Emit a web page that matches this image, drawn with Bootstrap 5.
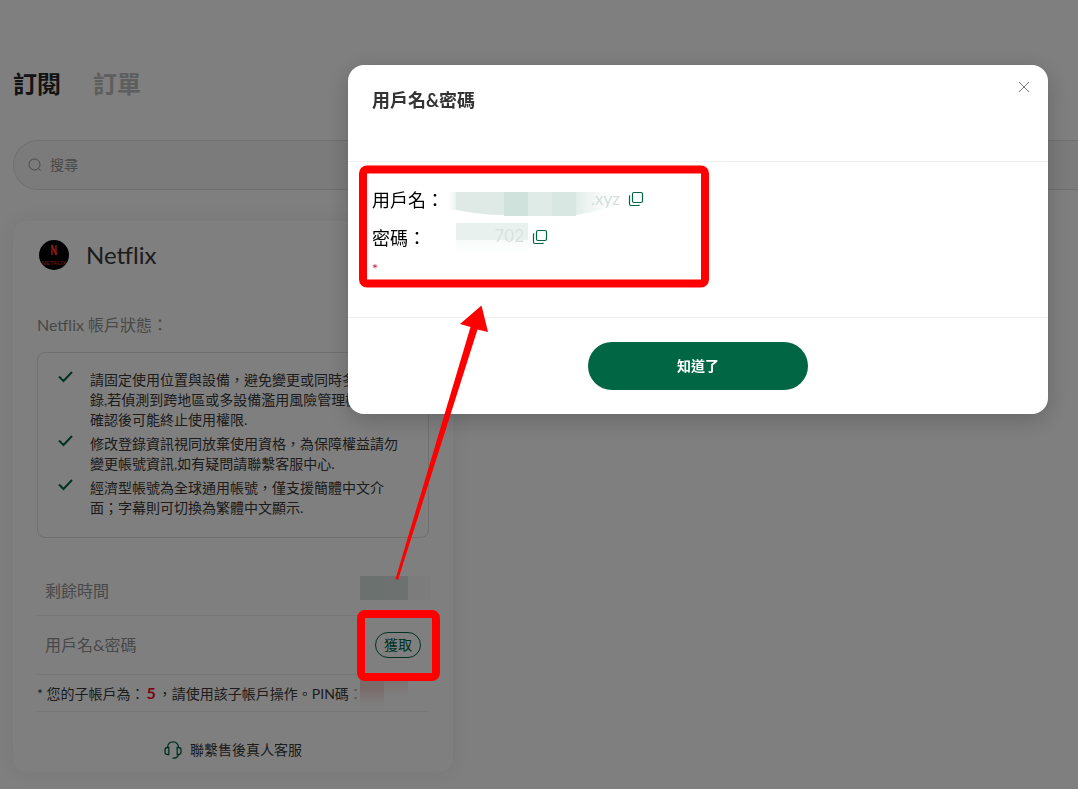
<!DOCTYPE html>
<html lang="zh-Hant">
<head>
<meta charset="utf-8">
<meta name="viewport" content="width=device-width, initial-scale=1">
<title>訂閱</title>
<link href="https://cdn.jsdelivr.net/npm/bootstrap@5.3.0/dist/css/bootstrap.min.css" rel="stylesheet">
<style>
  :root { --brand: #006644; --accent: #c8102e; --muted-ink: #929292; }
  body { font-family: Lato, "Noto Sans CJK TC", sans-serif; font-size: 14px; line-height: 20px; color: #383838; overflow: hidden; }
  .page { padding: 66px 0 16px 13px; }
  .page-tabs { gap: 32px; margin-bottom: 38px; }
  .page-tabs a { font-size: 24px; line-height: 36px; font-weight: 700; color: #bdbdbd; text-decoration: none; }
  .page-tabs a.active { color: #262626; }
  .search-bar { height: 50px; padding-left: 14px; gap: 8px; border: 1px solid #dedede; border-right: 0; border-radius: 25px 0 0 25px; background: #f7f7f7; margin-bottom: 31px; }
  .search-bar input { font-size: 14px; color: #333; }
  .search-bar input::placeholder { color: #949494; }
  .plan-card { width: 440px; max-width: 100%; border-radius: 14px; padding: 17px 24px 12px; background: #fff; box-shadow: 0 0 24px rgba(0, 0, 0, .08); }
  .plan-logo { width: 34px; height: 34px; }
  .plan-name { font-size: 24px; line-height: 34px; font-weight: 400; }
  .plan-head { gap: 15px; margin-bottom: 41px; }
  .status-label { font-size: 16px; line-height: 24px; color: var(--muted-ink); margin-bottom: 15px; }
  .notice-list { border: 1px solid #dedede; border-radius: 8px; padding: 17px 28px 19px 20px; gap: 4px; margin-bottom: 34px; }
  .notice-list li { gap: 17px; }
  .notice-list svg { margin-top: 1px; }
  .info-row { font-size: 16px; line-height: 24px; color: var(--muted-ink); border-bottom: 1px solid #efefef; padding: 7px 8px; min-height: 44px; }
  .info-row.tall { min-height: 59px; }
  .hidden-time { margin: -3px -10px 0 0; }
  .get-btn { width: 46px; height: 26px; font-size: 14px; line-height: 20px; border: 1px solid var(--brand); border-radius: 13px; color: var(--brand); background: #fff; }
  .pin-note { height: 37px; border-bottom: 1px solid #efefef; padding: 8px 0; white-space: nowrap; }
  .pin-note b { font-size: 16px; line-height: 20px; color: #f00a2c; margin: 0 2px; }
  .pin-note svg { margin: -4px 0 0 -8px; }
  .support-link { color: #383838; text-decoration: none; gap: 8px; padding-top: 28px; }
  .modal-backdrop.show { opacity: .5; }
  .cred-dialog { width: 700px; max-width: calc(100% - 348px); margin: 65px 0 0 348px; }
  .cred-dialog .modal-content { border: 0; border-radius: 16px; box-shadow: 0 6px 24px rgba(0, 0, 0, .2); }
  .cred-dialog .modal-header { height: 97px; padding: 23px 17px 0 24px; border-color: #f0f0f0; }
  .cred-dialog .modal-title { font-size: 18px; line-height: 24px; font-weight: 700; color: #333; }
  .close-x { width: 14px; height: 14px; margin-top: -8px; }
  .cred-dialog .modal-body { padding: 19px 24px 36px; color: #000; font-size: 18px; line-height: 38px; }
  .cred-dialog .modal-footer { padding: 24px; border-color: #f0f0f0; }
  .copy-btn { width: 16px; height: 16px; margin: 0 0 2px 4px; }
  .ok-btn, .ok-btn:hover { width: 220px; height: 48px; border-radius: 24px; background: var(--brand); font-size: 14px; line-height: 20px; padding: 0; font-weight: 700; color: #fff; }
  .star { font-size: 14px; line-height: 24px; color: var(--accent); }
  .markup { z-index: 1080; pointer-events: none; }
</style>
</head>
<body>
<main class="page">
  <nav class="page-tabs d-flex">
    <a class="active" href="#">訂閱</a>
    <a href="#">訂單</a>
  </nav>
  <label class="search-bar d-flex align-items-center">
    <svg width="14" height="14" viewBox="0 0 14 14" fill="none" stroke="#909090"><circle cx="6.5" cy="6.5" r="5.5"/><path d="M10.5 10.5 12.5 12.5"/></svg>
    <input class="border-0 bg-transparent p-0 flex-grow-1" type="search" placeholder="搜尋" aria-label="搜尋">
  </label>

  <section class="plan-card">
    <div class="plan-head d-flex align-items-center">
      <svg class="plan-logo" viewBox="0 0 34 34" aria-hidden="true">
        <circle cx="17" cy="17" r="16" fill="#000" stroke="#fff" stroke-width="2"/>
        <path d="M15 7v10M19 7v10" stroke="#c8201a" stroke-width="2"/><path d="M14.500 7 19.500 17" stroke="#ff3a2c" stroke-width="2"/>
        <text x="17" y="27" text-anchor="middle" font-family="Liberation Sans" font-size="6" fill="#e83a30">NETFLIX</text>
      </svg>
      <h2 class="plan-name mb-0">Netflix</h2>
    </div>
    <div class="status-label">Netflix 帳戶狀態：</div>
    <ul class="notice-list list-unstyled d-flex flex-column">
      <li class="d-flex"><svg class="flex-shrink-0" width="15" height="12" viewBox="0 0 15 12" fill="none" stroke="#006644" stroke-width="2"><path d="M1 5.5 5.5 10 14 1"/></svg><span>請固定使用位置與設備，避免變更或同時多設備登錄,若偵測到跨地區或多設備濫用風險管理機制，確認後可能終止使用權限.</span></li>
      <li class="d-flex"><svg class="flex-shrink-0" width="15" height="12" viewBox="0 0 15 12" fill="none" stroke="#006644" stroke-width="2"><path d="M1 5.5 5.5 10 14 1"/></svg><span>修改登錄資訊視同放棄使用資格，為保障權益請勿變更帳號資訊,如有疑問請聯繫客服中心.</span></li>
      <li class="d-flex"><svg class="flex-shrink-0" width="15" height="12" viewBox="0 0 15 12" fill="none" stroke="#006644" stroke-width="2"><path d="M1 5.5 5.5 10 14 1"/></svg><span>經濟型帳號為全球通用帳號，僅支援簡體中文介面；字幕則可切換為繁體中文顯示.</span></li>
    </ul>
    <div class="info-row d-flex justify-content-between align-items-start">
      <span>剩餘時間</span>
      <svg class="hidden-time" width="71" height="24" viewBox="0 0 71 24" aria-hidden="true"><path d="M0 0h24v24H0z" fill="#d5e2dc"/><path d="M24 0h24v24H24z" fill="#dbe5e1"/><path d="M48 0h22v24H48z" fill="#f9f9f9"/></svg>
    </div>
    <div class="info-row tall d-flex justify-content-between align-items-center">
      <span>用戶名&amp;密碼</span>
      <button class="get-btn p-0" type="button">獲取</button>
    </div>
    <div class="pin-note d-flex">
      <span>* 您的子帳戶為：<b>5</b>，請使用該子帳戶操作。PIN碼：</span>
      <svg width="54" height="30" viewBox="0 0 54 30" aria-hidden="true"><defs><linearGradient id="pinFade" x2="0" y2="1"><stop offset=".3" stop-color="#f5d6d6"/><stop offset="1" stop-color="#f7e9e9" stop-opacity="0"/></linearGradient></defs><path d="M0 0h5v24H0z" fill="#fff" opacity=".6"/><path d="M5 0h24v30H5z" fill="url(#pinFade)"/><path d="M29 0h24v18H29z" fill="url(#pinFade)" opacity=".6"/></svg>
    </div>
    <a class="support-link d-flex justify-content-center align-items-center" href="#">
      <svg width="18" height="18" viewBox="0 0 18 18" fill="none" stroke="#006644" stroke-width="1.3"><path d="M3.500 6.500C3.800 3 6 .8 9 .8s5.200 2.200 5.500 5.700M4.800 6.500v7H3.500A2.500 2.500 0 0 1 1 11V9a2.500 2.500 0 0 1 2.500-2.500zM13.200 6.500v7h1.300A2.500 2.500 0 0 0 17 11V9a2.500 2.500 0 0 0-2.500-2.500zM14.500 13.500C14 16 12 17.300 8.500 17.200"/></svg>
      <span>聯繫售後真人客服</span>
    </a>
  </section>
</main>

<div class="modal-backdrop show"></div>
<div class="modal d-block" role="dialog" aria-modal="true" aria-labelledby="credTitle">
  <div class="cred-dialog modal-dialog">
    <div class="modal-content">
      <div class="modal-header align-items-start justify-content-between">
        <h1 class="modal-title" id="credTitle">用戶名&amp;密碼</h1>
        <button class="close-x border-0 bg-transparent p-0 d-flex" type="button" aria-label="關閉">
          <svg width="14" height="14" viewBox="0 0 14 14" stroke="#777"><path d="M2 2 12 12M12 2 2 12"/></svg>
        </button>
      </div>
      <div class="modal-body">
        <div class="d-flex align-items-center">
          <span>用戶名：</span>
          <svg width="180" height="38" viewBox="0 0 180 38" aria-hidden="true">
            <defs>
              <linearGradient id="nameFade"><stop stop-color="#eff5f3" stop-opacity="0"/><stop offset="1" stop-color="#eaf2ef"/></linearGradient>
              <linearGradient id="tailFade"><stop stop-color="#e2edea"/><stop offset="1" stop-color="#f4f8f7" stop-opacity="0"/></linearGradient>
              <linearGradient id="downFade" x2="0" y2="1"><stop stop-color="#f0f5f3"/><stop offset="1" stop-color="#fff"/></linearGradient>
            </defs>
            <path d="M4 11h8v18H4z" fill="url(#nameFade)"/>
            <path d="M12 11h48v23Q36 34 12 29z" fill="#dfeae7"/><path d="M60 11h24v24H60z" fill="#cfe2db"/><path d="M84 11h24v24H84z" fill="#deebe6"/><path d="M108 11h24v24h-24z" fill="#d8e7e1"/>
            <path d="M132 11h46Q170 29 132 34z" fill="url(#tailFade)"/>
            <text x="176" y="24" text-anchor="end" font-size="17" fill="#d3dfdb">.xyz</text>
          </svg>
          <button class="copy-btn border-0 bg-transparent p-0 d-flex" type="button" aria-label="複製用戶名"><svg width="16" height="16" viewBox="0 0 16 16" fill="none" stroke="#006644" stroke-width="1.200"><rect x="4.500" y="1.500" width="10" height="10" rx="1.500"/><path d="M2 4.500Q1.500 5 1.500 6v7q0 1.500 1.500 1.500h7q1 0 1.500-.5"/></svg></button>
        </div>
        <div class="d-flex align-items-center">
          <span>密碼：</span>
          <svg width="102" height="38" viewBox="0 0 102 38" aria-hidden="true">
            <path d="M30 4h72v30H30z" fill="url(#downFade)"/><path d="M30 4h72v17H30z" fill="#e9f1ee"/>
            <text x="98" y="23" text-anchor="end" font-size="17" fill="#d8e2de">702</text>
          </svg>
          <button class="copy-btn border-0 bg-transparent p-0 d-flex" type="button" aria-label="複製密碼"><svg width="16" height="16" viewBox="0 0 16 16" fill="none" stroke="#006644" stroke-width="1.200"><rect x="4.500" y="1.500" width="10" height="10" rx="1.500"/><path d="M2 4.500Q1.500 5 1.500 6v7q0 1.500 1.500 1.500h7q1 0 1.500-.5"/></svg></button>
        </div>
        <div class="star">*</div>
      </div>
      <div class="modal-footer justify-content-center">
        <button class="ok-btn btn m-0" type="button">知道了</button>
      </div>
    </div>
  </div>
</div>
<svg class="markup position-absolute top-0 start-0" width="1078" height="789" viewBox="0 0 1078 789" fill="none" aria-hidden="true">
  <rect x="363" y="169.500" width="342" height="114" rx="4" stroke="#f00" stroke-width="8"/>
  <rect x="361" y="614" width="75" height="63" rx="4" stroke="#f00" stroke-width="8"/>
  <path d="M395.500 579 470.500 327 460 324 481.500 305.500 488 332 477.500 329.500 398 580z" fill="#f00"/>
</svg>
</body>
</html>
